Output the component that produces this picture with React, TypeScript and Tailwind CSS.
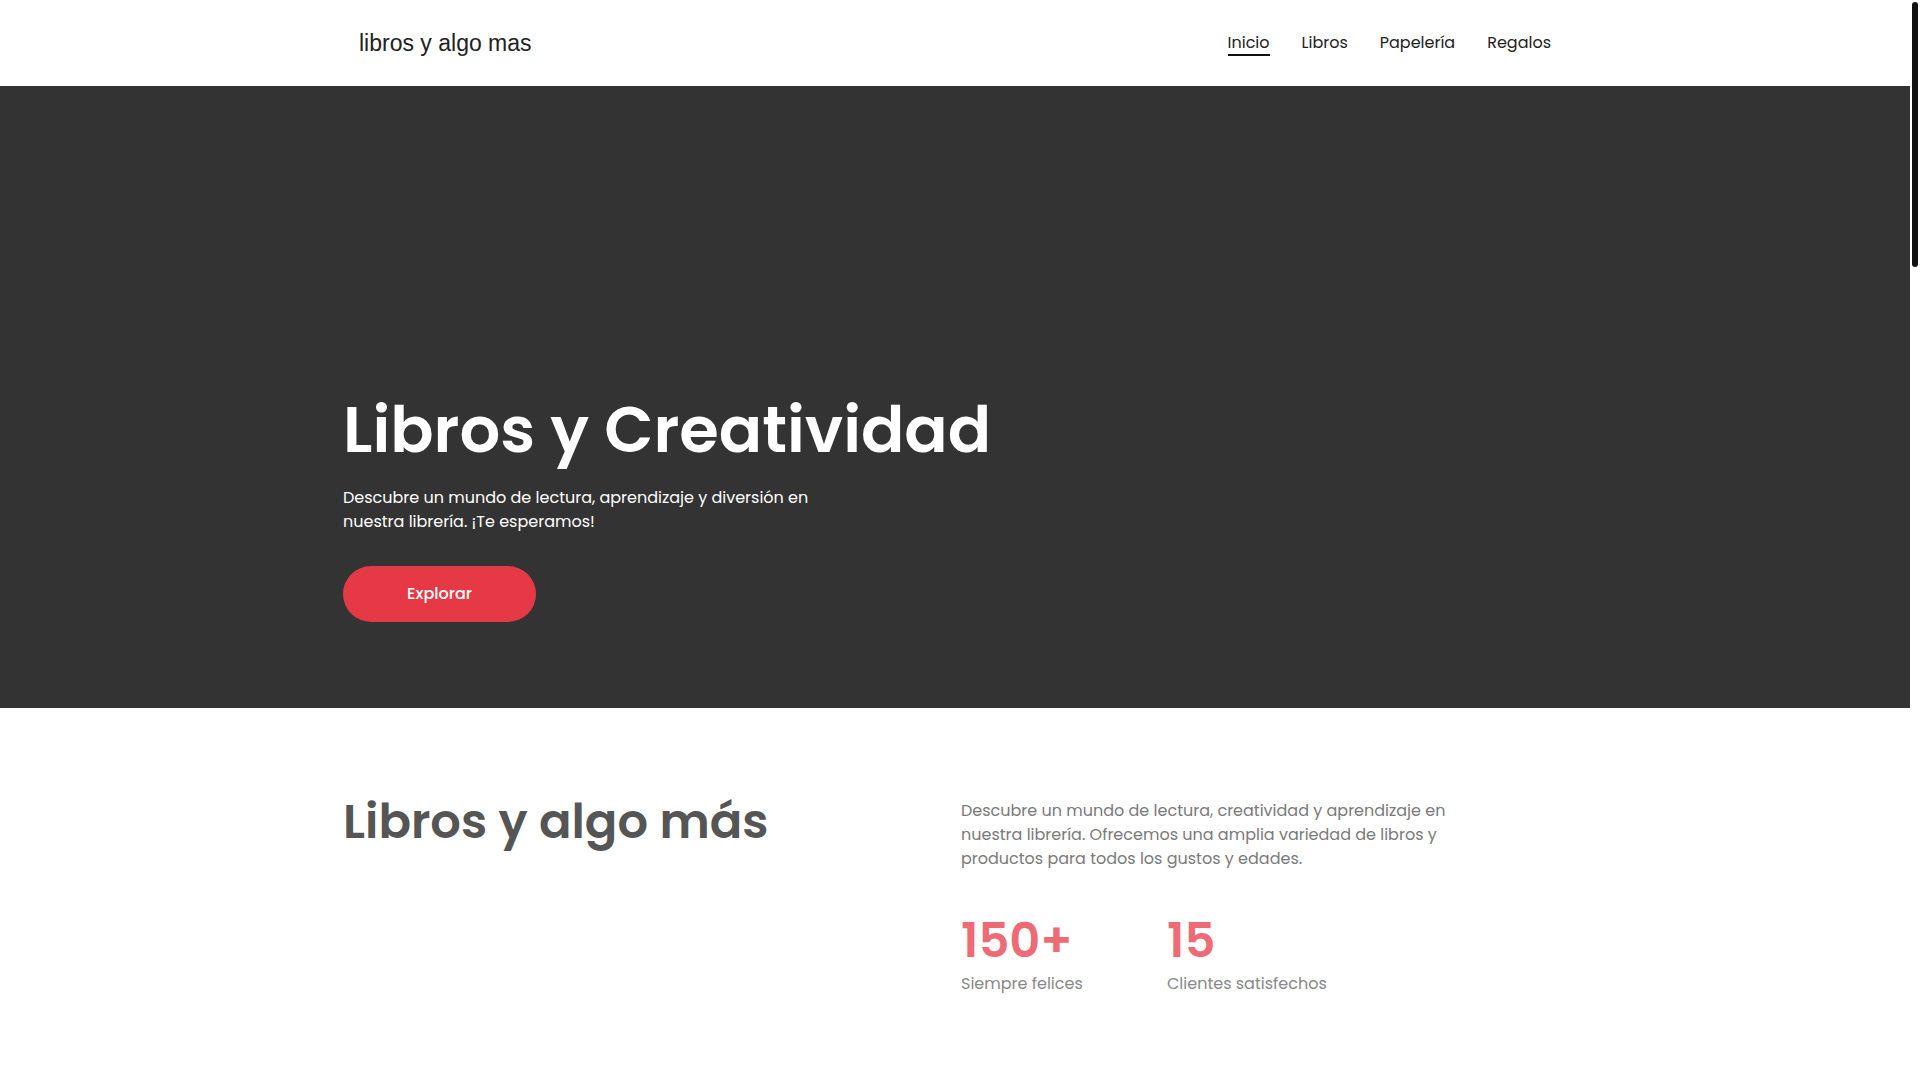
import React from 'react';

const navLinks = [
  { name: 'Inicio', active: true },
  { name: 'Libros', active: false },
  { name: 'Papelería', active: false },
  { name: 'Regalos', active: false },
];

const stats = [
  { value: '150+', label: 'Siempre felices' },
  { value: '15', label: 'Clientes satisfechos' },
];

const App: React.FC = () => {
  return (
    <div className="relative min-h-screen bg-white pr-[10px] font-['Poppins','Open_Sans',sans-serif]">
      {/* Header */}
      <header className="bg-white">
        <div className="max-w-[1224px] mx-auto h-[86px] px-4 flex items-center justify-between">
          <a href="#" className="font-['Liberation_Sans','Arial',sans-serif] text-[23px] text-[#222] leading-none">
            libros y algo mas
          </a>
          <nav className="flex items-center gap-8">
            {navLinks.map((link) => (
              <a
                key={link.name}
                href="#"
                className={`relative text-[16px] leading-6 text-[#222] ${link.active ? 'after:absolute after:left-0 after:right-0 after:-bottom-[1px] after:h-[2px] after:bg-[#111]' : ''}`}
              >
                {link.name}
              </a>
            ))}
          </nav>
        </div>
      </header>

      {/* Hero */}
      <section className="bg-[#333333]">
        <div className="max-w-[1224px] mx-auto pt-[306px] pb-[86px]">
          <h1 className="text-[64px] leading-[75px] font-semibold text-white">
            Libros y Creatividad
          </h1>
          <p className="mt-[19px] max-w-[480px] text-[16px] leading-6 text-white">
            Descubre un mundo de lectura, aprendizaje y diversión en nuestra librería. ¡Te esperamos!
          </p>
          <button className="mt-[32px] w-[193px] h-[56px] rounded-full bg-[#e63946] text-white text-[16px] font-medium">
            Explorar
          </button>
        </div>
      </section>

      {/* About */}
      <section className="bg-white">
        <div className="max-w-[1224px] mx-auto pt-[85px] pb-[60px] grid grid-cols-2 gap-[12px]">
          <h2 className="text-[48px] leading-[58px] font-semibold text-[#555]">
            Libros y algo más
          </h2>
          <div className="mt-[6px]">
            <p className="max-w-[500px] text-[16px] leading-6 text-[#7a7a7a]">
              Descubre un mundo de lectura, creatividad y aprendizaje en nuestra librería. Ofrecemos una amplia variedad de libros y productos para todos los gustos y edades.
            </p>
            <div className="mt-[41px] flex">
              {stats.map((s) => (
                <div key={s.label} className="w-[206px]">
                  <div className="text-[48px] leading-[58px] font-semibold text-[#ee6a74]">{s.value}</div>
                  <div className="mt-[2px] text-[16px] leading-6 text-[#888]">{s.label}</div>
                </div>
              ))}
            </div>
          </div>
        </div>
      </section>

      {/* Scrollbar of the page */}
      <div className="fixed top-0 right-0 h-screen w-[10px] bg-white">
        <div className="absolute top-[2px] right-[2px] w-[6px] h-[265px] rounded-full bg-[#111]" />
      </div>
    </div>
  );
};

export default App;
